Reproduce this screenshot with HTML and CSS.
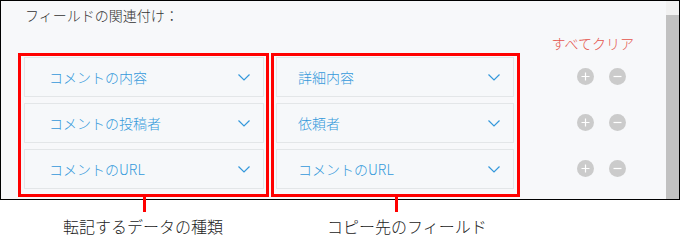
FILE: index.html
```html
<!DOCTYPE html>
<html lang="ja">
<head>
<meta charset="utf-8">
<link rel="stylesheet" href="styles.css">
</head>
<body>
<div class="frame">
  <div class="content">
    <div class="title">フィールドの関連付け：</div>
    <div class="clear-row"><span class="clear">すべてクリア</span></div>
    <div class="mapping">
      <div class="box box-left">
        <div class="dd"><span>コメントの内容</span><svg class="chev" width="12" height="7" viewBox="0 0 12 7"><path d="M0.5 0.5 L6 6 L11.5 0.5" fill="none" stroke="#3498db" stroke-width="1.2"/></svg></div>
        <div class="dd"><span>コメントの投稿者</span><svg class="chev" width="12" height="7" viewBox="0 0 12 7"><path d="M0.5 0.5 L6 6 L11.5 0.5" fill="none" stroke="#3498db" stroke-width="1.2"/></svg></div>
        <div class="dd"><span>コメントのURL</span><svg class="chev" width="12" height="7" viewBox="0 0 12 7"><path d="M0.5 0.5 L6 6 L11.5 0.5" fill="none" stroke="#3498db" stroke-width="1.2"/></svg></div>
      </div>
      <div class="box box-right">
        <div class="dd dd-r"><span>詳細内容</span><svg class="chev" width="12" height="7" viewBox="0 0 12 7"><path d="M0.5 0.5 L6 6 L11.5 0.5" fill="none" stroke="#3498db" stroke-width="1.2"/></svg></div>
        <div class="dd dd-r"><span>依頼者</span><svg class="chev" width="12" height="7" viewBox="0 0 12 7"><path d="M0.5 0.5 L6 6 L11.5 0.5" fill="none" stroke="#3498db" stroke-width="1.2"/></svg></div>
        <div class="dd dd-r"><span>コメントのURL</span><svg class="chev" width="12" height="7" viewBox="0 0 12 7"><path d="M0.5 0.5 L6 6 L11.5 0.5" fill="none" stroke="#3498db" stroke-width="1.2"/></svg></div>
      </div>
      <div class="buttons">
        <div class="btn-row"><span class="circ"><svg width="17" height="17" viewBox="0 0 17 17"><path d="M8.5 4.5 V12.5 M4.5 8.5 H12.5" stroke="#fff" stroke-width="1.2"/></svg></span><span class="circ"><svg width="17" height="17" viewBox="0 0 17 17"><path d="M4.5 8.5 H12.5" stroke="#fff" stroke-width="1.2"/></svg></span></div>
        <div class="btn-row"><span class="circ"><svg width="17" height="17" viewBox="0 0 17 17"><path d="M8.5 4.5 V12.5 M4.5 8.5 H12.5" stroke="#fff" stroke-width="1.2"/></svg></span><span class="circ"><svg width="17" height="17" viewBox="0 0 17 17"><path d="M4.5 8.5 H12.5" stroke="#fff" stroke-width="1.2"/></svg></span></div>
        <div class="btn-row"><span class="circ"><svg width="17" height="17" viewBox="0 0 17 17"><path d="M8.5 4.5 V12.5 M4.5 8.5 H12.5" stroke="#fff" stroke-width="1.2"/></svg></span><span class="circ"><svg width="17" height="17" viewBox="0 0 17 17"><path d="M4.5 8.5 H12.5" stroke="#fff" stroke-width="1.2"/></svg></span></div>
      </div>
    </div>
  </div>
  <div class="scrollbar"><div class="thumb"></div></div>
</div>
<div class="labels">
  <span class="label label-left">転記するデータの種類</span>
  <span class="label label-right">コピー先のフィールド</span>
</div>
</body>
</html>
```
FILE: styles.css
```css
html, body {
  margin: 0;
  padding: 0;
  background: #fff;
}
body {
  width: 680px;
  height: 240px;
  overflow: hidden;
  font-family: "Noto Sans CJK JP", "Noto Sans", sans-serif;
  font-weight: 300;
}
.frame {
  box-sizing: border-box;
  width: 680px;
  height: 200px;
  border: 1px solid #000;
  background: #f7f8fa;
  display: flex;
}
.content {
  flex: 1;
  display: flex;
  flex-direction: column;
}
.title {
  margin-top: 4px;
  padding-left: 24px;
  height: 20px;
  line-height: 20px;
  font-size: 14px;
  color: #333;
}
.clear-row {
  margin-top: 8px;
  height: 20px;
  line-height: 20px;
  display: flex;
  justify-content: flex-end;
  padding-right: 32px;
}
.clear {
  font-size: 14px;
  color: #e5544b;
}
.mapping {
  display: flex;
  margin-left: 17px;
}
.box {
  position: relative;
  box-sizing: border-box;
  border: 3px solid #f00;
  display: flex;
  flex-direction: column;
  gap: 6px;
  padding: 1px 2px 5px 3px;
}
.box::after {
  content: "";
  position: absolute;
  left: 50%;
  top: 100%;
  width: 3px;
  height: 18px;
  margin-left: -1px;
  background: #f00;
}
.box-left {
  width: 251px;
}
.box-right {
  width: 249px;
  margin-left: 2px;
  padding: 1px 3px 5px 2px;
}
.dd {
  box-sizing: border-box;
  height: 40px;
  border: 1px solid #e3e6e8;
  background: #f6f8fa;
  display: flex;
  align-items: center;
  justify-content: space-between;
  padding: 0 13px 0 24px;
  font-size: 14px;
  color: #3498db;
}
.dd-r {
  padding-left: 21px;
}
.chev {
  display: block;
}
.buttons {
  margin-left: 57px;
  padding-top: 3px;
  display: flex;
  flex-direction: column;
  gap: 6px;
}
.btn-row {
  height: 40px;
  display: flex;
  align-items: center;
  gap: 15px;
}
.circ {
  width: 17px;
  height: 17px;
  border-radius: 50%;
  background: #cbcbcb;
  display: block;
}
.circ svg {
  display: block;
}
.scrollbar {
  width: 13px;
  display: flex;
  flex-direction: column;
  background: #f1f1f1;
}
.thumb {
  margin-top: 14px;
  flex: 1;
  background: #c1c1c1;
}
.labels {
  display: flex;
  margin-top: 16px;
  height: 20px;
  line-height: 20px;
  font-size: 16px;
  color: #222;
}
.label-left {
  margin-left: 63px;
}
.label-right {
  margin-left: 104px;
}
```
